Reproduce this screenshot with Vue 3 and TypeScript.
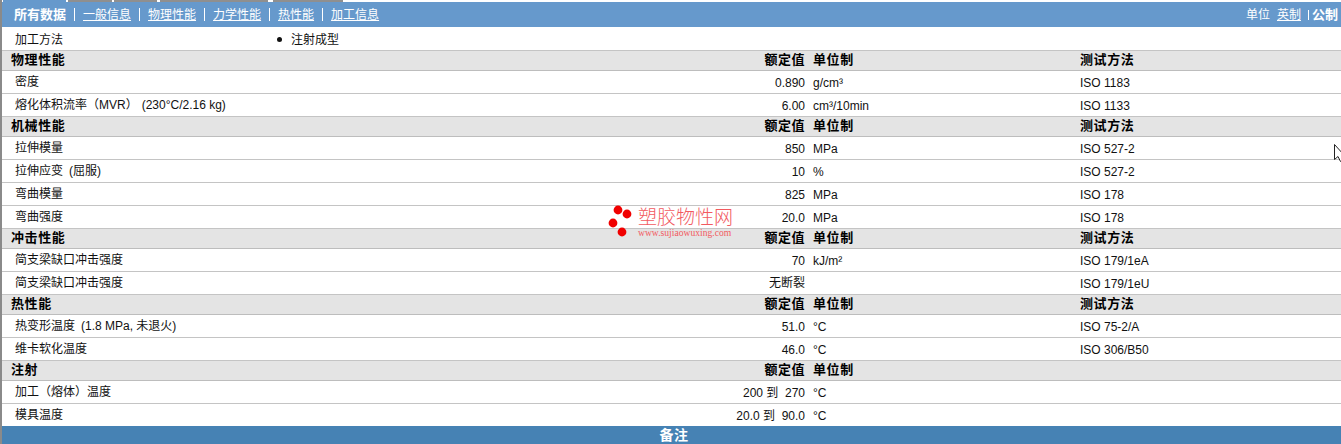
<script setup lang="ts">
interface Row { name: string; cond?: string; value?: string; from?: string; to?: string; unit?: string; test?: string }
interface Section { title: string; test: boolean; rows: Row[] }

const links: string[] = ['一般信息', '物理性能', '力学性能', '热性能', '加工信息']

const sections: Section[] = [
  { title: '物理性能', test: true, rows: [
    { name: '密度', value: '0.890', unit: 'g/cm³', test: 'ISO 1183' },
    { name: '熔化体积流率（MVR）', cond: '(230°C/2.16 kg)', value: '6.00', unit: 'cm³/10min', test: 'ISO 1133' },
  ] },
  { title: '机械性能', test: true, rows: [
    { name: '拉伸模量', value: '850', unit: 'MPa', test: 'ISO 527-2' },
    { name: '拉伸应变', cond: '(屈服)', value: '10', unit: '%', test: 'ISO 527-2' },
    { name: '弯曲模量', value: '825', unit: 'MPa', test: 'ISO 178' },
    { name: '弯曲强度', value: '20.0', unit: 'MPa', test: 'ISO 178' },
  ] },
  { title: '冲击性能', test: true, rows: [
    { name: '简支梁缺口冲击强度', value: '70', unit: 'kJ/m²', test: 'ISO 179/1eA' },
    { name: '简支梁缺口冲击强度', value: '无断裂', test: 'ISO 179/1eU' },
  ] },
  { title: '热性能', test: true, rows: [
    { name: '热变形温度', cond: '(1.8 MPa, 未退火)', value: '51.0', unit: '°C', test: 'ISO 75-2/A' },
    { name: '维卡软化温度', value: '46.0', unit: '°C', test: 'ISO 306/B50' },
  ] },
  { title: '注射', test: false, rows: [
    { name: '加工（熔体）温度', from: '200', to: '270', unit: '°C' },
    { name: '模具温度', from: '20.0', to: '90.0', unit: '°C' },
  ] },
]
</script>

<template>
  <div class="page">
    <div class="tabs">
      <span class="tab t1"></span><span class="tab t2"></span><span class="tab t3"></span><span class="tab t4"></span><span class="tab t5"></span>
    </div>
    <nav class="nav">
      <div class="nav-left">
        <b class="current">所有数据</b>
        <template v-for="l in links" :key="l">
          <i class="sep"></i><a class="link">{{ l }}</a>
        </template>
      </div>
      <div class="nav-right">
        <span>单位</span><a class="link unit-link">英制</a><i class="sep small"></i><b class="metric">公制</b>
      </div>
    </nav>

    <div class="method">
      <span class="method-name">加工方法</span>
      <span class="dot"></span>
      <span>注射成型</span>
    </div>

    <section v-for="s in sections" :key="s.title">
      <div class="row head">
        <span class="title">{{ s.title }}</span>
        <span class="val">额定值</span>
        <span class="unit">单位制</span>
        <span class="test">{{ s.test ? '测试方法' : '' }}</span>
      </div>
      <div v-for="(r, i) in s.rows" :key="i" class="row item">
        <span class="name">{{ r.name }}<span v-if="r.cond" class="cond" :class="{ 'after-paren': r.name.endsWith('）') }">{{ r.cond }}</span></span>
        <span class="val" :class="{ num: r.value !== '无断裂' }">
          <template v-if="r.from">{{ r.from }} 到&nbsp; {{ r.to }}</template>
          <template v-else>{{ r.value }}</template>
        </span>
        <span class="unit num">{{ r.unit }}</span>
        <span class="test num">{{ r.test }}</span>
      </div>
    </section>

    <footer class="notes">备注</footer>

    <div class="logo">
      <svg class="balls" width="32" height="36" viewBox="0 0 32 36">
        <circle cx="12" cy="8" r="4.4" />
        <circle cx="21" cy="12" r="4.4" />
        <circle cx="7" cy="21" r="4.4" />
        <circle cx="16" cy="30" r="4.4" />
      </svg>
      <div class="logo-text">
        <div class="logo-cn">塑胶物性网</div>
        <div class="logo-en">www.sujiaowuxing.com</div>
      </div>
    </div>

    <svg class="cursor" width="10" height="18" viewBox="0 0 10 18">
      <path d="M0.5 0.5 V15.5 L4 12.5 L6.5 17.5 H10 V11 L0.5 0.5 Z" fill="#fff" stroke="#222" stroke-width="1" />
    </svg>
  </div>
</template>

<style scoped>
.page {
  position: relative;
  height: 444px;
  overflow: hidden;
  box-sizing: border-box;
  border-left: 2px solid #8a8a8a;
  background: #fff;
  color: #111;
  font: 12px/16px "Liberation Sans", "Noto Sans CJK SC", sans-serif;
}
.tabs { display: flex; height: 2px; background: #fff; }
.tab { display: block; height: 2px; background: #8f8f8f; }
.t1 { width: 63px; margin-left: 1px; background: #6699cc; }
.t2 { width: 44px; margin-left: 2px; }
.t3 { width: 43px; margin-left: 2px; }
.t4 { width: 108px; margin-left: 3px; }
.t5 { width: 70px; margin-left: 5px; }

.nav {
  height: 25px;
  background: #6699cc;
  color: #fff;
  display: flex;
  align-items: center;
  justify-content: space-between;
  padding: 0 3px 0 12px;
  box-sizing: border-box;
}
.nav-left, .nav-right { display: flex; align-items: center; }
.current { font-size: 13px; font-weight: 700; }
.link { text-decoration: underline; color: #fff; }
.sep { display: block; width: 1px; height: 13px; background: #fff; margin: 0 8px; }
.unit-link { margin-left: 7px; }
.sep.small { height: 10px; margin: 0 3px 0 7px; }
.metric { font-size: 13px; font-weight: 700; }

.method {
  height: 24px;
  box-sizing: border-box;
  border-bottom: 1px solid #c4c4c4;
  padding-top: 2px;
  display: flex;
  align-items: center;
}
.method-name { width: 262px; padding-left: 13px; box-sizing: border-box; flex: none; }
.dot { width: 5px; height: 5px; border-radius: 50%; background: #111; margin: 0 9px 0 13px; }

.row {
  display: grid;
  grid-template-columns: 603px 200px 275px 1fr;
  align-items: center;
  box-sizing: border-box;
}
.head {
  height: 20px;
  padding-bottom: 2px;
  background: #e4e4e4;
  border-bottom: 1px solid #bdbdbd;
  font-size: 13px;
  font-weight: 700;
  letter-spacing: 0.6px;
  color: #000;
}
.item { height: 23px; border-bottom: 1px solid #c4c4c4; }
section:last-of-type .item:last-child { height: 22px; border-bottom: 0; }
.title { padding-left: 9px; }
.name { padding-left: 13px; white-space: nowrap; }
.cond { margin-left: 6px; }
.cond.after-paren { margin-left: 4px; }
.val { text-align: right; white-space: nowrap; }
.unit { padding-left: 8px; }
.head .val { letter-spacing: 0.5px; }
.num { padding-top: 2px; }

.notes {
  height: 18px;
  padding-left: 5px;
  background: #4682b4;
  color: #fff;
  font-size: 14px;
  font-weight: 700;
  line-height: 18px;
  text-align: center;
  letter-spacing: 0.5px;
}

.logo {
  position: absolute;
  left: 604px;
  top: 202px;
  display: flex;
  pointer-events: none;
}
.balls { fill: #f00000; flex: none; }
.logo-text { padding-top: 5px; }
.logo-cn { font-size: 19px; font-weight: 300; line-height: 21px; color: #f25a5f; white-space: nowrap; }
.logo-en { font: 9.6px/10px "Liberation Serif", serif; color: #f25a5f; white-space: nowrap; }

.cursor { position: absolute; right: -3px; top: 144px; }
</style>
